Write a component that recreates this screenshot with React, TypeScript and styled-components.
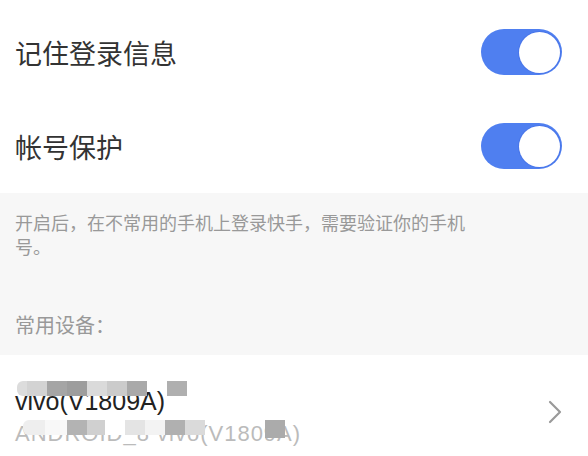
import React from "react";
import styled, { createGlobalStyle } from "styled-components";

const GlobalStyle = createGlobalStyle`
  html, body {
    margin: 0;
    padding: 0;
    background: #ffffff;
    overflow: hidden;
  }
  body {
    font-family: "Noto Sans CJK SC", "Noto Sans", sans-serif;
  }
`;

type Cell = { w: number; c: string };

const nameCells: Cell[] = [
  { w: 10, c: "#dcdcdc" },
  { w: 20, c: "#d3d3d3" },
  { w: 20, c: "#a5a5a5" },
  { w: 20, c: "#9d9d9d" },
  { w: 20, c: "#dadada" },
  { w: 20, c: "#cbcbcb" },
  { w: 20, c: "#a9a9a9" },
  { w: 20, c: "transparent" },
  { w: 20, c: "#afafaf" },
];

const subCells: Cell[] = [
  { w: 22, c: "#eeeeee" },
  { w: 22, c: "#f8f8f8" },
  { w: 20, c: "#b3b3b3" },
  { w: 18, c: "#d0d0d0" },
  { w: 20, c: "#ffffff" },
  { w: 20, c: "#e4e4e4" },
  { w: 20, c: "#f3f3f3" },
  { w: 20, c: "#b0b0b0" },
  { w: 20, c: "#dadada" },
  { w: 60, c: "transparent" },
  { w: 20, c: "#ababab" },
];

export default function App() {
  return (
    <Page>
      <GlobalStyle />
      <SwitchRow>
        <Title>记住登录信息</Title>
        <Toggle $on>
          <Knob />
        </Toggle>
      </SwitchRow>
      <SwitchRow>
        <Title>帐号保护</Title>
        <Toggle $on>
          <Knob />
        </Toggle>
      </SwitchRow>

      <GreySection>
        <Hint>开启后，在不常用的手机上登录快手，需要验证你的手机号。</Hint>
        <SectionLabel>常用设备：</SectionLabel>
      </GreySection>

      <DeviceRow>
        <DeviceInfo>
          <DeviceName>
            vivo(V1809A)
            <Mosaic $top={-5} $left={2}>
              {nameCells.map((cell, i) => (
                <MosaicCell key={i} $w={cell.w} $c={cell.c} $h={15} />
              ))}
            </Mosaic>
          </DeviceName>
          <DeviceSub>
            ANDROID_8 vivo(V1809A)
            <Mosaic $top={0} $left={8}>
              {subCells.map((cell, i) => (
                <MosaicCell
                  key={i}
                  $w={cell.w}
                  $c={cell.c}
                  $h={i === subCells.length - 1 ? 18 : 15}
                />
              ))}
            </Mosaic>
          </DeviceSub>
        </DeviceInfo>
        <Chevron width="14" height="24" viewBox="0 0 14 24">
          <path
            d="M2 2 L12 12 L2 22"
            fill="none"
            stroke="#9a9a9a"
            strokeWidth="2.2"
            strokeLinecap="round"
            strokeLinejoin="round"
          />
        </Chevron>
      </DeviceRow>
    </Page>
  );
}

const Page = styled.div`
  width: 588px;
  height: 456px;
  padding-top: 5px;
  box-sizing: border-box;
  overflow: hidden;
  background: #ffffff;
`;

const SwitchRow = styled.div`
  height: 94px;
  padding: 0 26px 0 15px;
  display: flex;
  align-items: center;
  justify-content: space-between;
`;

const Title = styled.div`
  font-size: 27px;
  color: #333333;
  line-height: 1;
`;

const Toggle = styled.div<{ $on?: boolean }>`
  width: 81px;
  height: 46px;
  border-radius: 23px;
  background: ${(p) => (p.$on ? "#4f7ff0" : "#e0e0e0")};
  display: flex;
  align-items: center;
  justify-content: ${(p) => (p.$on ? "flex-end" : "flex-start")};
  padding: 0 2px;
  box-sizing: border-box;
`;

const Knob = styled.div`
  width: 41px;
  height: 41px;
  border-radius: 50%;
  background: #ffffff;
  box-shadow: 0 0 0 1px rgba(60, 100, 220, 0.35);
`;

const GreySection = styled.div`
  background: #f7f7f7;
  padding: 17px 0 16px 15px;
`;

const Hint = styled.div`
  width: 460px;
  font-size: 18px;
  line-height: 24px;
  color: #999999;
`;

const SectionLabel = styled.div`
  margin-top: 53px;
  font-size: 20px;
  line-height: 28px;
  color: #999999;
`;

const DeviceRow = styled.div`
  display: flex;
  align-items: flex-start;
  justify-content: space-between;
  padding: 31px 26px 0 15px;
  background: #ffffff;
`;

const DeviceInfo = styled.div`
  display: flex;
  flex-direction: column;
  gap: 4px;
`;

const DeviceName = styled.div`
  position: relative;
  font-family: "Liberation Sans", Arial, sans-serif;
  font-size: 25px;
  line-height: 30px;
  color: #222222;
`;

const DeviceSub = styled.div`
  position: relative;
  font-family: "Liberation Sans", Arial, sans-serif;
  font-size: 22px;
  line-height: 28px;
  letter-spacing: 1px;
  color: #bbbbbb;
`;

const Mosaic = styled.div<{ $top: number; $left: number }>`
  position: absolute;
  top: ${(p) => p.$top}px;
  left: ${(p) => p.$left}px;
  display: flex;
  align-items: flex-start;
`;

const MosaicCell = styled.div<{ $w: number; $c: string; $h: number }>`
  width: ${(p) => p.$w}px;
  height: ${(p) => p.$h}px;
  background: ${(p) => p.$c};
  flex-shrink: 0;
  &:first-child {
    border-radius: 6px 0 0 6px;
  }
`;

const Chevron = styled.svg`
  margin-top: 14px;
  flex-shrink: 0;
`;
